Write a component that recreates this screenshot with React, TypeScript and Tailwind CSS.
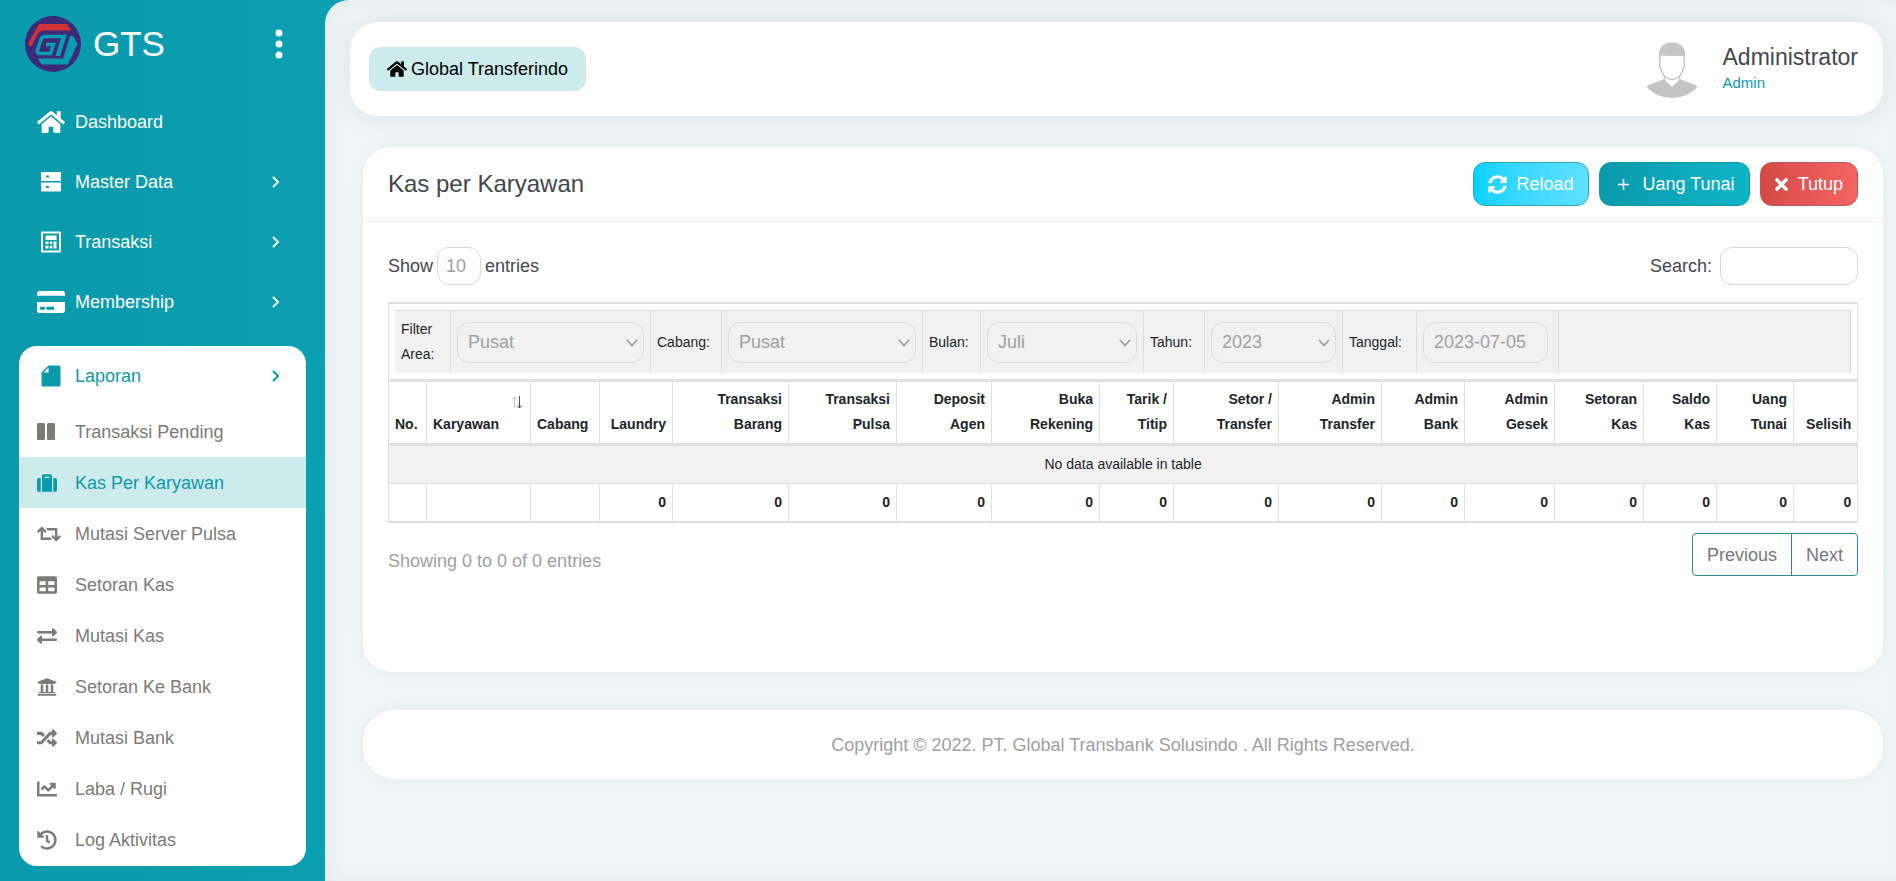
import type { ReactNode } from "react";
import { BiChevronRight, BiPlus } from "react-icons/bi";
import {
  FaChartLine,
  FaCreditCard,
  FaExchangeAlt,
  FaHistory,
  FaHome,
  FaRandom,
  FaRetweet,
  FaSuitcase,
  FaSyncAlt,
  FaTable,
  FaTimes,
  FaUniversity,
} from "react-icons/fa";

function Logo() {
  return (
    <svg viewBox="0 0 56 56" className="size-14" role="img" aria-label="GTS logo">
      <circle cx="28" cy="28" r="28" fill="#3b2a78" />
      <path d="M14 8H42L46 14.500H18Q14 15 12 19L6 31L3 28Z" fill="#d23136" />
      <path
        d="M32 20.500H20Q17 20.500 16 23.500L12.500 34Q11.500 37.500 15 37.500H25.500L28.500 28.500H21"
        fill="none"
        stroke="#0b9cae"
        strokeWidth="3.600"
      />
      <path d="M31 18.700H42L35 40H30.500L36 22.300H30Z" fill="#0b9cae" />
      <path d="M45 20H48L52.500 28L43 48.500H17L12.500 42.500H38Z" fill="#0b9cae" />
    </svg>
  );
}

function CabinetIcon() {
  return (
    <svg viewBox="0 0 20 20" className="size-5" fill="currentColor" aria-hidden="true">
      <path
        d="M1 0H19A1 1 0 0 1 20 1V9H0V1A1 1 0 0 1 1 0ZM5 3.500V5.500H8V3.500ZM0 10.500H20V18.500A1 1 0 0 1 19 19.500H1A1 1 0 0 1 0 18.500ZM5 14V16H8V14Z"
        fillRule="evenodd"
      />
    </svg>
  );
}

function CalculatorIcon() {
  return (
    <svg viewBox="0 0 20 22" className="h-[22px] w-5" fill="currentColor" aria-hidden="true">
      <path
        d="M1 .5H19A1 1 0 0 1 20 1.500V20.500A1 1 0 0 1 19 21.500H1A1 1 0 0 1 0 20.500V1.500A1 1 0 0 1 1 .5ZM2 2.500V19.500H18V2.500Z"
        fillRule="evenodd"
      />
      <path d="M4.500 4.500H15.500V9H4.500ZM4.500 10.500H7.500V13H4.500ZM8.700 10.500H11.300V13H8.700ZM4.500 14.500H7.500V17.500H4.500ZM8.700 14.500H11.300V17.500H8.700ZM12.500 10.500H15.500V17.500H12.500Z" />
    </svg>
  );
}

function FileIcon() {
  return (
    <svg viewBox="0 0 20 22" className="h-[22px] w-5" fill="currentColor" aria-hidden="true">
      <path
        d="M7.500 0.500H18A1.500 1.500 0 0 1 19.500 2V20A1.500 1.500 0 0 1 18 21.500H2A1.500 1.500 0 0 1 .5 20V7.500ZM2.500 7.500H7.500V2.500Z"
        fillRule="evenodd"
      />
    </svg>
  );
}

function BarsIcon() {
  return (
    <svg viewBox="0 0 18 17" className="h-[17px] w-[18px]" fill="currentColor" aria-hidden="true">
      <rect width="8" height="17" rx="1.500" />
      <rect x="10" width="8" height="17" rx="1.500" />
    </svg>
  );
}

function Avatar() {
  return (
    <svg viewBox="0 -2 52 58" className="h-[58px] w-[52px]" role="img" aria-label="Administrator">
      <path
        d="M14 13H38V20Q39.500 24 37 27Q35 34 31 36Q26 39 21 36Q17 34 15 27Q12.500 24 14 20Z"
        fill="#fff"
        stroke="#c4c4c4"
        strokeWidth="1.300"
      />
      <path d="M13 19V10Q15 .5 26 .5T39 10V19L37.500 13Q24 14 16.500 11.500L14.500 14Z" fill="#c4c4c4" />
      <path d="M18.500 34V38M33.500 34V38" stroke="#c4c4c4" strokeWidth="1" />
      <path d="M18 37L26 45L34 37Q42 40 47 42Q50 43 51.500 45Q41 56 26 56T.5 45Q2 43 5 42Q10 40 18 37Z" fill="#c4c4c4" />
    </svg>
  );
}

function SortIcon() {
  return (
    <svg viewBox="0 0 10 13" className="h-[13px] w-[10px]" fill="none" aria-hidden="true">
      <path d="M2.500 12V1M.5 3.500L2.500 1L4.500 3.500" stroke="#c2c4c6" />
      <path d="M7.500 0V12M5.500 9.500L7.500 12L9.500 9.500" stroke="#4a4d50" />
    </svg>
  );
}

const mainLinks: { label: string; icon: ReactNode; more: boolean }[] = [
  { label: "Dashboard", icon: <FaHome className="size-7" />, more: false },
  { label: "Master Data", icon: <CabinetIcon />, more: true },
  { label: "Transaksi", icon: <CalculatorIcon />, more: true },
  { label: "Membership", icon: <FaCreditCard className="size-7" />, more: true },
];

const reportLinks: { label: string; icon: ReactNode }[] = [
  { label: "Transaksi Pending", icon: <BarsIcon /> },
  { label: "Kas Per Karyawan", icon: <FaSuitcase className="size-5" /> },
  { label: "Mutasi Server Pulsa", icon: <FaRetweet className="size-6" /> },
  { label: "Setoran Kas", icon: <FaTable className="size-5" /> },
  { label: "Mutasi Kas", icon: <FaExchangeAlt className="size-5" /> },
  { label: "Setoran Ke Bank", icon: <FaUniversity className="size-5" /> },
  { label: "Mutasi Bank", icon: <FaRandom className="size-5" /> },
  { label: "Laba / Rugi", icon: <FaChartLine className="size-5" /> },
  { label: "Log Aktivitas", icon: <FaHistory className="size-5" /> },
];

function Sidebar() {
  return (
    <aside className="w-[325px] shrink-0 pb-3.5 text-white">
      <div className="flex h-[92px] items-start pt-4 pr-[42px] pl-[25px]">
        <Logo />
        <span className="ml-3 text-[35px] leading-14">GTS</span>
        <button type="button" aria-label="Menu" className="ml-auto flex h-14 items-center">
          <svg viewBox="0 0 8 30" className="h-[30px] w-2" fill="currentColor" aria-hidden="true">
            <circle cx="4" cy="4" r="3.500" />
            <circle cx="4" cy="15" r="3.500" />
            <circle cx="4" cy="26" r="3.500" />
          </svg>
        </button>
      </div>
      <nav>
        <ul>
          {mainLinks.map((link) => (
            <li key={link.label}>
              <a href="#" className="flex h-[60px] items-center pr-[38px] pl-[37px]">
                <span className="flex w-7 justify-center">{link.icon}</span>
                <span className="ml-2.5">{link.label}</span>
                {link.more && <BiChevronRight className="ml-auto size-6" />}
              </a>
            </li>
          ))}
        </ul>
        <div className="mx-[19px] mt-3.5 rounded-[18px] bg-white pb-px">
          <a href="#" className="flex h-[60px] items-center pr-[19px] pl-[18px] text-[#0b9aab]">
            <span className="flex w-7 justify-center">
              <FileIcon />
            </span>
            <span className="ml-2.5">Laporan</span>
            <BiChevronRight className="ml-auto size-6" />
          </a>
          <ul className="text-[#7b7b78]">
            {reportLinks.map((link) => (
              <li key={link.label}>
                <a
                  href="#"
                  className={
                    link.label === "Kas Per Karyawan"
                      ? "flex h-[51px] items-center bg-[#cdeaec] pl-[18px] text-[#0b9aab]"
                      : "flex h-[51px] items-center pl-[18px]"
                  }
                >
                  <span className="flex w-[38px]">{link.icon}</span>
                  <span>{link.label}</span>
                </a>
              </li>
            ))}
          </ul>
        </div>
      </nav>
    </aside>
  );
}

function TopBar() {
  return (
    <header className="flex items-center justify-between rounded-[28px] bg-white py-[18px] pr-[25px] pl-[19px] shadow-[0_0_30px_rgba(0,0,0,0.08)]">
      <a href="#" className="flex h-11 items-center gap-1 rounded-xl bg-[#cdeaec] px-[18px] text-black">
        <FaHome className="size-5" />
        Global Transferindo
      </a>
      <div className="flex items-center gap-[25px]">
        <Avatar />
        <div>
          <p className="text-[23px] leading-7 text-[#43474c]">Administrator</p>
          <p className="text-[15px] leading-6 text-[#0b9aab]">Admin</p>
        </div>
      </div>
    </header>
  );
}

const field = "h-[41px] w-full rounded-xl border border-[#dadcde] bg-transparent pl-2.5 text-[#a0a0a0]";

function FilterSelect({ id, value }: { id: string; value: string }) {
  return (
    <div className="relative w-full">
      <select id={id} className={field + " appearance-none"}>
        <option>{value}</option>
      </select>
      <svg
        viewBox="0 0 12 8"
        className="pointer-events-none absolute top-[17px] right-1.5 h-2 w-3"
        fill="none"
        stroke="#9b9d9f"
        strokeWidth="1.800"
        aria-hidden="true"
      >
        <path d="M1 1L6 6.500L11 1" />
      </svg>
    </div>
  );
}

function Filters() {
  const cell = "flex shrink-0 items-center border-r border-[#dcdedf] px-1.5";
  return (
    <div className="flex h-[63px] border-t border-[#dcdedf] bg-[#f1f1f1] text-left font-normal">
      <label htmlFor="area" className={cell + " w-14"}>
        Filter Area:
      </label>
      <div className={cell + " w-[200px] text-[18px]"}>
        <FilterSelect id="area" value="Pusat" />
      </div>
      <label htmlFor="cabang" className={cell + " w-[71px]"}>
        Cabang:
      </label>
      <div className={cell + " w-[201px] text-[18px]"}>
        <FilterSelect id="cabang" value="Pusat" />
      </div>
      <label htmlFor="bulan" className={cell + " w-[58px]"}>
        Bulan:
      </label>
      <div className={cell + " w-[163px] text-[18px]"}>
        <FilterSelect id="bulan" value="Juli" />
      </div>
      <label htmlFor="tahun" className={cell + " w-[61px]"}>
        Tahun:
      </label>
      <div className={cell + " w-[138px] text-[18px]"}>
        <FilterSelect id="tahun" value="2023" />
      </div>
      <label htmlFor="tanggal" className={cell + " w-[74px]"}>
        Tanggal:
      </label>
      <div className={cell + " w-[142px] pr-2.5 text-[18px]"}>
        <input id="tanggal" type="text" defaultValue="2023-07-05" className={field} />
      </div>
      <div className="flex-1 border-r border-[#dcdedf]" />
    </div>
  );
}

const columns: { lines: string[]; width: string; left?: boolean; sort?: boolean }[] = [
  { lines: ["No."], width: "w-[38px]", left: true },
  { lines: ["Karyawan"], width: "w-[104px]", left: true, sort: true },
  { lines: ["Cabang"], width: "w-[69px]", left: true },
  { lines: ["Laundry"], width: "w-[73px]" },
  { lines: ["Transaksi", "Barang"], width: "w-[116px]" },
  { lines: ["Transaksi", "Pulsa"], width: "w-[108px]" },
  { lines: ["Deposit", "Agen"], width: "w-[95px]" },
  { lines: ["Buka", "Rekening"], width: "w-[108px]" },
  { lines: ["Tarik /", "Titip"], width: "w-[74px]" },
  { lines: ["Setor /", "Transfer"], width: "w-[105px]" },
  { lines: ["Admin", "Transfer"], width: "w-[103px]" },
  { lines: ["Admin", "Bank"], width: "w-[83px]" },
  { lines: ["Admin", "Gesek"], width: "w-[90px]" },
  { lines: ["Setoran", "Kas"], width: "w-[89px]" },
  { lines: ["Saldo", "Kas"], width: "w-[73px]" },
  { lines: ["Uang", "Tunai"], width: "w-[77px]" },
  { lines: ["Selisih"], width: "w-[64px]" },
];

function CashTable() {
  return (
    <table className="w-full table-fixed border-separate border-spacing-0 border-t-2 border-l border-[#dfe0e1] text-[14px] leading-[25px] text-[#212529]">
      <colgroup>
        {columns.map((column) => (
          <col key={column.lines.join(" ")} className={column.width} />
        ))}
      </colgroup>
      <thead>
        <tr>
          <td colSpan={17} className="border-r border-b-3 border-[#dfe0e1] p-1.5">
            <Filters />
          </td>
        </tr>
        <tr>
          {columns.map((column) => (
            <th
              key={column.lines.join(" ")}
              scope="col"
              className={
                "relative border-r border-b-3 border-[#dfe0e1] px-1.5 pt-[5px] pb-1.5 align-bottom whitespace-nowrap " +
                (column.left ? "text-left" : "text-right")
              }
            >
              {column.lines.map((line) => (
                <span key={line} className="block">
                  {line}
                </span>
              ))}
              {column.sort && (
                <span className="absolute top-3.5 right-2">
                  <SortIcon />
                </span>
              )}
            </th>
          ))}
        </tr>
      </thead>
      <tbody>
        <tr>
          <td colSpan={17} className="border-r border-b border-[#dfe0e1] bg-[#f1f1f1] p-1.5 text-center">
            No data available in table
          </td>
        </tr>
      </tbody>
      <tfoot>
        <tr>
          {columns.map((column) => (
            <td
              key={column.lines.join(" ")}
              className="h-[39px] border-r border-b-2 border-[#dfe0e1] p-1.5 text-right font-bold"
            >
              {column.left ? "" : "0"}
            </td>
          ))}
        </tr>
      </tfoot>
    </table>
  );
}

const action = "flex h-11 items-center gap-2.5 rounded-xl border bg-linear-to-r text-white";

function CashCard() {
  return (
    <section className="rounded-[28px] bg-white shadow-[0_0_20px_rgba(0,0,0,0.04)]">
      <div className="flex items-center justify-between border-b border-[#ebeef0] px-[25px] py-[15px]">
        <h1 className="text-[24px] leading-9 text-[#43474c]">Kas per Karyawan</h1>
        <div className="flex gap-2.5">
          <button type="button" className={action + " border-[#2aa6b8] from-[#00d2ff] to-[#5de0ff] px-3.5"}>
            <FaSyncAlt className="size-[19px]" />
            Reload
          </button>
          <button type="button" className={action + " border-[#0f98a8] from-[#0b9aab] to-[#0db5c8] px-3.5"}>
            <BiPlus className="size-[19px]" />
            Uang Tunai
          </button>
          <button type="button" className={action + " border-[#b9595f] from-[#d54a46] to-[#f56462] px-3.5"}>
            <FaTimes className="h-[19px] w-[13px]" />
            Tutup
          </button>
        </div>
      </div>
      <div className="px-[25px] pt-[25px] pb-24 text-[#43474c]">
        <div className="flex h-[38px] items-center justify-between">
          <label className="flex items-center gap-1">
            <span>Show</span>
            <select className="h-[38px] w-11 appearance-none rounded-xl border border-[#d6d8da] pl-2 text-[#a0a0a0]">
              <option>10</option>
            </select>
            <span>entries</span>
          </label>
          <label className="flex items-center gap-2">
            <span>Search:</span>
            <input type="search" className="h-[38px] w-[138px] rounded-xl border border-[#d6d8da] px-2" />
          </label>
        </div>
        <div className="mt-[17px]">
          <CashTable />
        </div>
        <div className="mt-2.5 flex items-start justify-between">
          <p className="pt-4 text-[#a0a0a0]">Showing 0 to 0 of 0 entries</p>
          <div className="flex h-[43px] rounded border border-[#2c8b96] text-[#75797d]">
            <button type="button" className="border-r border-[#2c8b96] px-3.5">
              Previous
            </button>
            <button type="button" className="px-3.5">
              Next
            </button>
          </div>
        </div>
      </div>
    </section>
  );
}

export default function App() {
  return (
    <div className="flex min-h-screen bg-linear-to-r from-[#0a9aab] to-[#0a9fb1] to-[325px] font-['Liberation_Sans',Arial,sans-serif] text-[18px] leading-6">
      <Sidebar />
      <main className="min-w-0 flex-1 rounded-tl-[24px] bg-[#edf5f7] pt-[22px] pr-[13px] pb-10 pl-[25px] shadow-[inset_8px_0_20px_rgba(0,0,0,0.04)]">
        <TopBar />
        <div className="mt-[31px] ml-[13px]">
          <CashCard />
          <footer className="mt-[38px] rounded-[32px] bg-white px-6 pt-[23px] pb-[22px] text-center text-[#a0a0a0] shadow-[0_0_20px_rgba(0,0,0,0.04)]">
            Copyright © 2022. PT. Global Transbank Solusindo . All Rights Reserved.
          </footer>
        </div>
      </main>
    </div>
  );
}
